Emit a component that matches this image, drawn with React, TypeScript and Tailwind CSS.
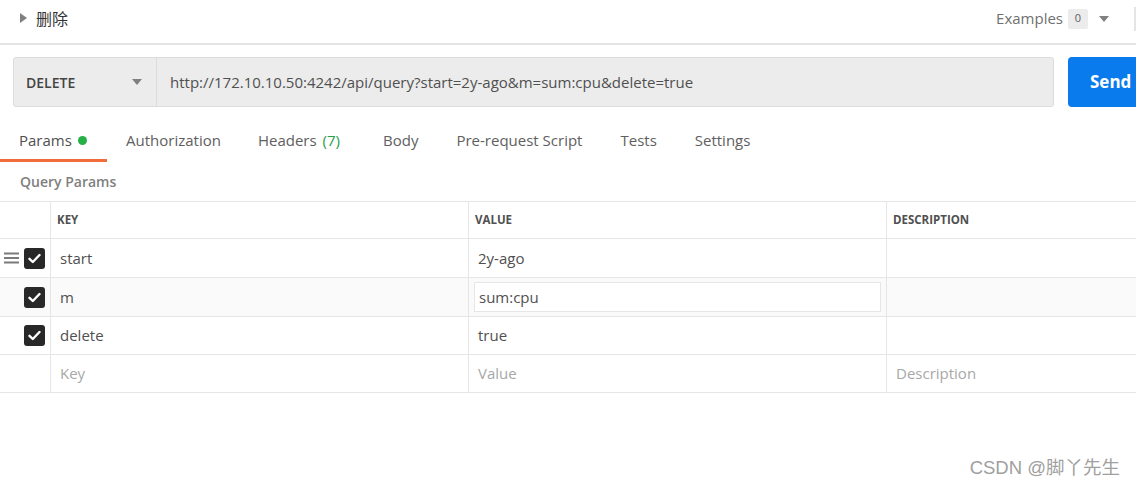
import { useState } from "react";

type Row = { key: string; value: string; editing?: boolean };

const rows: Row[] = [
  { key: "start", value: "2y-ago" },
  { key: "m", value: "sum:cpu", editing: true },
  { key: "delete", value: "true" },
];

const tabs = ["Authorization", "Headers", "Body", "Pre-request Script", "Tests", "Settings"];

function Check() {
  return (
    <span className="flex h-[21px] w-[21px] items-center justify-center rounded-[3px] bg-[#282828]">
      <svg width="13" height="11" viewBox="0 0 13 11" fill="none">
        <path d="M1.5 5.8 L4.8 9 L11.5 2" stroke="white" strokeWidth="2.4" strokeLinecap="round" strokeLinejoin="round" />
      </svg>
    </span>
  );
}

export default function App() {
  const [active] = useState("Params");
  return (
    <div className="relative h-[487px] w-[1136px] overflow-hidden bg-white text-[#505050]" style={{ fontFamily: '"Open Sans", "Noto Sans CJK SC", sans-serif' }}>
      {/* title bar */}
      <header className="flex h-[45px] items-center border-b-2 border-[#e5e5e5] pb-[6px] pl-[20px]">
        <svg width="7" height="10" viewBox="0 0 7 10" className="mb-[1px]">
          <path d="M0 0 L7 5 L0 10 Z" fill="#808080" />
        </svg>
        <span className="ml-[9px] text-[16px] text-[#333]">删除</span>
        <div className="ml-auto flex items-center">
          <span className="text-[15px] text-[#707070]">Examples</span>
          <span className="ml-[5px] flex h-[20px] w-[20px] items-center justify-center rounded-[2px] bg-[#ececec] text-[11px] text-[#606060]">0</span>
          <svg width="10" height="6" viewBox="0 0 10 6" className="ml-[11px]">
            <path d="M0 0 L10 0 L5 6 Z" fill="#808080" />
          </svg>
          <span className="ml-[25px] h-[24px] w-[2px] bg-[#e5e5e5]" />
        </div>
      </header>

      {/* request bar */}
      <div className="mt-[12px] flex h-[50px] pl-[13px]">
        <div className="flex flex-1 rounded-[3px] border border-[#dcdcdc] bg-[#ececec]">
          <div className="flex w-[143px] items-center border-r border-[#dcdcdc] pl-[12px] pr-[14px]">
            <span className="text-[14px] font-semibold text-[#444]">DELETE</span>
            <svg width="10" height="6" viewBox="0 0 10 6" className="ml-auto">
              <path d="M0 0 L10 0 L5 6 Z" fill="#808080" />
            </svg>
          </div>
          <div className="flex flex-1 items-center pl-[13px] text-[15px] text-[#505050]">
            http://172.10.10.50:4242/api/query?start=2y-ago&amp;m=sum:cpu&amp;delete=true
          </div>
        </div>
        <button className="ml-[14px] w-[68px] rounded-l-[4px] bg-[#097bed] pl-[22px] text-left text-[17px] font-bold text-white">
          Send
        </button>
      </div>

      {/* tabs */}
      <nav className="mt-[15px] flex h-[40px] items-stretch text-[15px] text-[#606060]">
        <div className={`flex w-[107px] items-center border-b-[3px] pl-[19px] ${active === "Params" ? "border-[#f26b3a]" : "border-transparent"}`}>
          <span className="text-[#505050]">Params</span>
          <span className="ml-[6px] h-[9px] w-[9px] rounded-full bg-[#26b047]" />
        </div>
        {tabs.map((t, i) => (
          <div key={t} className={`flex items-center pb-[3px] ${["ml-[19px]", "ml-[37px]", "ml-[43px]", "ml-[38px]", "ml-[38px]", "ml-[38px]"][i]}`}>
            {t}
            {t === "Headers" && <span className="ml-[6px] text-[#26a047]">(7)</span>}
          </div>
        ))}
      </nav>

      <div className="flex h-[39px] items-center pl-[20px] text-[14px] font-semibold text-[#808080]">Query Params</div>

      {/* table */}
      <div className="border-t border-[#e6e6e6] text-[14px]">
        <div className="grid h-[37px] grid-cols-[51px_418px_418px_1fr] border-b border-[#e6e6e6] text-[11.5px] font-bold text-[#505050]">
          <div className="border-r border-[#e6e6e6]" />
          <div className="flex items-center border-r border-[#e6e6e6] pl-[6px]">KEY</div>
          <div className="flex items-center border-r border-[#e6e6e6] pl-[6px]">VALUE</div>
          <div className="flex items-center pl-[6px]">DESCRIPTION</div>
        </div>
        {rows.map((r, i) => (
          <div key={r.key} className={`grid grid-cols-[51px_418px_418px_1fr] border-b border-[#e6e6e6] ${i < 2 ? "h-[39px]" : "h-[38px]"} ${r.editing ? "bg-[#fafafa]" : "bg-white"}`}>
            <div className="flex items-center border-r border-[#e6e6e6] pl-[4px]">
              {i === 0 ? (
                <svg width="15" height="12" viewBox="0 0 15 12" className="mr-[5px]">
                  <rect y="0.5" width="15" height="2" fill="#7a7a7a" />
                  <rect y="5" width="15" height="2" fill="#7a7a7a" />
                  <rect y="9.5" width="15" height="2" fill="#7a7a7a" />
                </svg>
              ) : (
                <span className="w-[20px]" />
              )}
              <Check />
            </div>
            <div className="flex items-center border-r border-[#e6e6e6] pl-[9px] text-[15px] text-[#505050]">{r.key}</div>
            <div className="flex items-center border-r border-[#e6e6e6] px-[5px] text-[15px]">
              {r.editing ? (
                <div className="flex h-[30px] w-full items-center border border-[#e6e6e6] bg-white pl-[4px] text-[#505050]">{r.value}</div>
              ) : (
                <span className="pl-[4px] text-[#505050]">{r.value}</span>
              )}
            </div>
            <div />
          </div>
        ))}
        <div className="grid h-[38px] grid-cols-[51px_418px_418px_1fr] border-b border-[#e6e6e6] text-[15px] text-[#a8a8a8]">
          <div className="border-r border-[#e6e6e6]" />
          <div className="flex items-center border-r border-[#e6e6e6] pl-[9px]">Key</div>
          <div className="flex items-center border-r border-[#e6e6e6] pl-[9px]">Value</div>
          <div className="flex items-center pl-[9px]">Description</div>
        </div>
      </div>

      <div className="absolute bottom-[5px] right-[16px] text-[18.5px] text-[#a0a0a0]" style={{ fontFamily: '"Liberation Sans", "Noto Sans CJK SC", sans-serif' }}>
        CSDN @脚丫先生
      </div>
    </div>
  );
}
